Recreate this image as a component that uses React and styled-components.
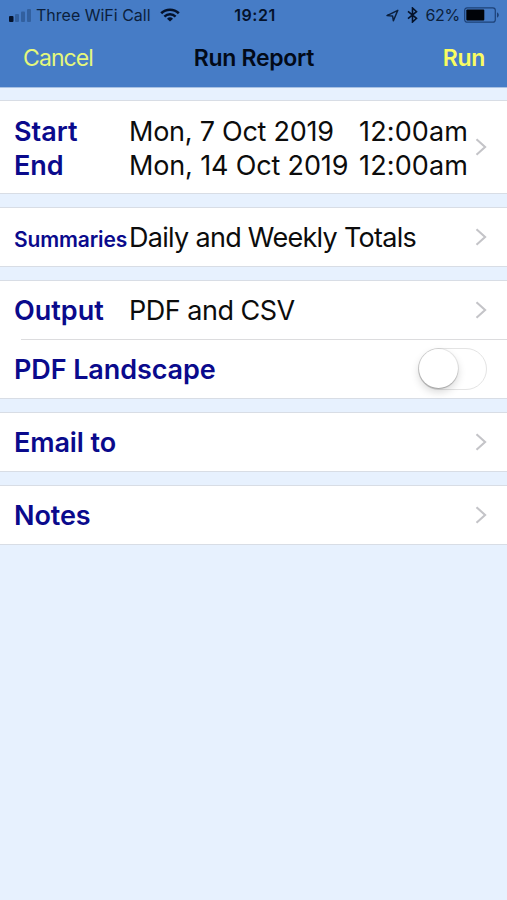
import React, { useState } from 'react'
import styled, { createGlobalStyle } from 'styled-components'

const GlobalStyle = createGlobalStyle`
  body {
    margin: 0;
    background: #e7f1fe;
    font-family: Inter, 'Liberation Sans', sans-serif;
  }
`

const Page = styled.div`
  box-sizing: border-box;
  width: 100%;
  min-height: 100vh;
  background: #e7f1fe;
`

const Header = styled.header`
  box-sizing: border-box;
  height: 88px;
  background: #467cc6;
  border-bottom: 1px solid #a9c2e4;
`

const StatusBar = styled.div`
  display: grid;
  grid-template-columns: 1fr auto 1fr;
  align-items: center;
  height: 30px;
  padding: 0 7px 0 8px;
  font-size: 16px;
  line-height: 30px;
  color: #0b1f3c;
  white-space: nowrap;
`

const StatusSide = styled.div`
  display: flex;
  align-items: center;
  justify-content: ${(props) => (props.$end ? 'flex-end' : 'flex-start')};
`

const Carrier = styled.span`
  margin: 0 9px 0 5px;
`

const Clock = styled.span`
  padding-left: 2px;
  font-weight: 600;
  letter-spacing: 0.5px;
  color: #04122b;
`

const Percent = styled.span`
  margin: 0 4px 0 8px;
  letter-spacing: -0.3px;
`

const NavBar = styled.nav`
  display: grid;
  grid-template-columns: 1fr auto 1fr;
  align-items: center;
  height: 56px;
  padding: 0 22px 0 23px;
`

const NavButton = styled.button`
  justify-self: ${(props) => (props.$bold ? 'end' : 'start')};
  padding: 0;
  border: 0;
  background: none;
  font-family: inherit;
  font-size: 23px;
  line-height: 28px;
  font-weight: ${(props) => (props.$bold ? 600 : 400)};
  letter-spacing: ${(props) => (props.$bold ? '-0.3px' : '-0.9px')};
  color: ${(props) => (props.$bold ? '#f9fc62' : '#e4f77c')};
`

const Title = styled.h1`
  margin: 0;
  font-size: 23px;
  line-height: 28px;
  font-weight: 600;
  letter-spacing: -0.3px;
  color: #020a18;
`

const Form = styled.main`
  display: flex;
  flex-direction: column;
  gap: 13px;
  padding-top: 12px;
`

const Group = styled.section`
  border-top: 1px solid #d8dde5;
  border-bottom: 1px solid #d8dde5;
  background: #fff;
`

const Row = styled.div`
  box-sizing: border-box;
  display: flex;
  align-items: center;
  justify-content: space-between;
  height: ${(props) => props.$height || 58}px;
  padding: 0 20px 0 14px;
`

const Divider = styled.div`
  height: 1px;
  margin-left: 21px;
  background: #dcdcde;
`

const Fields = styled.div`
  display: grid;
  grid-template-columns: 115px ${(props) => (props.$dates ? '230px' : 'auto')} auto;
  align-items: baseline;
  padding-top: ${(props) => props.$top || 2}px;
  line-height: 34px;
  white-space: nowrap;
`

const Label = styled.span`
  font-size: ${(props) => (props.$small ? 21 : 27)}px;
  font-weight: 600;
  letter-spacing: ${(props) => props.$spacing || 0}px;
  color: #0a0a8c;
`

const Value = styled.span`
  font-size: 27px;
  letter-spacing: ${(props) => props.$spacing || 0}px;
  color: #0c0c0c;
`

const Track = styled.button`
  box-sizing: border-box;
  display: flex;
  justify-content: ${(props) => (props.$on ? 'flex-end' : 'flex-start')};
  width: 69px;
  height: 42px;
  padding: 0;
  border: 1.5px solid #e4e4e4;
  border-radius: 21px;
  background: ${(props) => (props.$on ? '#4cd964' : '#fff')};
`

const Knob = styled.span`
  width: 39px;
  height: 39px;
  border-radius: 50%;
  background: #fff;
  box-shadow:
    0 0 0 1px rgba(0, 0, 0, 0.08),
    0 1px 1px rgba(0, 0, 0, 0.2),
    0 4px 9px rgba(0, 0, 0, 0.16);
`

const Bluetooth = styled.svg`
  margin-left: 8px;
`

function SignalIcon() {
  return (
    <svg width="23" height="14" viewBox="0 0 23 14">
      <rect x="1" y="8" width="4.5" height="6" rx="1" fill="#04122b" />
      <g fill="#32609f">
        <rect x="7" y="6" width="4" height="8" rx="1" />
        <rect x="13" y="3.5" width="4" height="10.5" rx="1" />
        <rect x="19" y="1" width="4" height="13" rx="1" />
      </g>
    </svg>
  )
}

function WifiIcon() {
  return (
    <svg width="20" height="14" viewBox="0 0 20 14" fill="none" stroke="#04122b">
      <path d="M1.2 5.3a12.6 12.6 0 0 1 17.6 0" strokeWidth="2.6" />
      <path d="M4.4 8.6a8 8 0 0 1 11.2 0" strokeWidth="2.4" />
      <path d="M10 13.6 7 10.7a4.4 4.4 0 0 1 6 0z" fill="#04122b" stroke="none" />
    </svg>
  )
}

function LocationIcon() {
  return (
    <svg width="13" height="13" viewBox="0 0 13 13" fill="none">
      <path
        d="M1 6.6 11.8 1.3 7.4 11.8 6.6 7z"
        stroke="#0b1f3c"
        strokeWidth="1.5"
        strokeLinejoin="round"
      />
    </svg>
  )
}

function BluetoothIcon() {
  return (
    <Bluetooth width="11" height="16" viewBox="0 0 11 16" fill="none">
      <path d="m1 4.4 8.5 7-4 3.6V1l4 3.6-8.5 7" stroke="#04122b" strokeWidth="1.6" />
    </Bluetooth>
  )
}

function BatteryIcon() {
  return (
    <svg width="36" height="16" viewBox="0 0 36 16">
      <rect x="0.7" y="0.8" width="30.6" height="14.4" rx="2.5" fill="none" stroke="#1d4177" strokeWidth="1.2" />
      <rect x="2.3" y="2.5" width="18" height="11" rx="1" fill="#000308" />
      <path d="M33 5.5c2.4.4 2.4 4.6 0 5z" fill="#1d4177" />
    </svg>
  )
}

function Chevron() {
  return (
    <svg width="12" height="18" viewBox="0 0 12 18" fill="none">
      <path d="m1.5 1.2 8.6 7.8-8.6 7.8" stroke="#c4c4c8" strokeWidth="2.1" />
    </svg>
  )
}

function App() {
  const [landscape, setLandscape] = useState(false)

  return (
    <Page>
      <GlobalStyle />
      <Header>
        <StatusBar>
          <StatusSide>
            <SignalIcon />
            <Carrier>Three WiFi Call</Carrier>
            <WifiIcon />
          </StatusSide>
          <Clock>19:21</Clock>
          <StatusSide $end>
            <LocationIcon />
            <BluetoothIcon />
            <Percent>62%</Percent>
            <BatteryIcon />
          </StatusSide>
        </StatusBar>
        <NavBar>
          <NavButton>Cancel</NavButton>
          <Title>Run Report</Title>
          <NavButton $bold>Run</NavButton>
        </NavBar>
      </Header>
      <Form>
        <Group>
          <Row $height={92}>
            <Fields $dates $top={3}>
              <Label>Start</Label>
              <Value $spacing={-0.25}>Mon, 7 Oct 2019</Value>
              <Value $spacing={0.15}>12:00am</Value>
              <Label>End</Label>
              <Value $spacing={-0.15}>Mon, 14 Oct 2019</Value>
              <Value $spacing={0.15}>12:00am</Value>
            </Fields>
            <Chevron />
          </Row>
        </Group>
        <Group>
          <Row>
            <Fields $top={4}>
              <Label $small $spacing={-0.15}>
                Summaries
              </Label>
              <Value $spacing={-0.7}>Daily and Weekly Totals</Value>
            </Fields>
            <Chevron />
          </Row>
        </Group>
        <Group>
          <Row>
            <Fields>
              <Label>Output</Label>
              <Value $spacing={-0.5}>PDF and CSV</Value>
            </Fields>
            <Chevron />
          </Row>
          <Divider />
          <Row>
            <Label $spacing={-0.1}>PDF Landscape</Label>
            <Track $on={landscape} onClick={() => setLandscape(!landscape)}>
              <Knob />
            </Track>
          </Row>
        </Group>
        <Group>
          <Row>
            <Label $spacing={-0.1}>Email to</Label>
            <Chevron />
          </Row>
        </Group>
        <Group>
          <Row>
            <Label $spacing={-0.1}>Notes</Label>
            <Chevron />
          </Row>
        </Group>
      </Form>
    </Page>
  )
}

export default App
